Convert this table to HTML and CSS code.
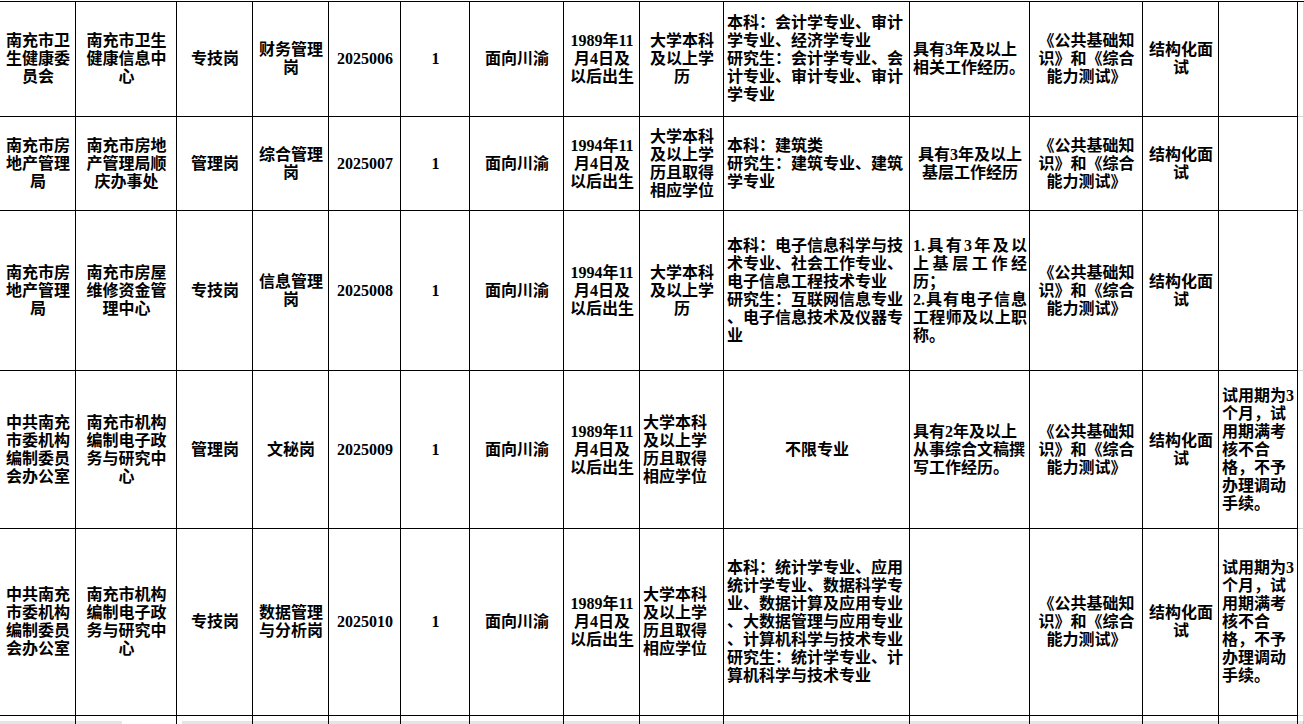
FILE: index.html
```html
<!DOCTYPE html>
<html lang="zh-CN">
<head>
<meta charset="utf-8">
<title>岗位表</title>
<link rel="stylesheet" href="styles.css">
</head>
<body>
<div class="sheet">
  <!-- row 1 -->
  <div class="c"><div>南充市卫生健康委员会</div></div>
  <div class="c"><div>南充市卫生健康信息中心</div></div>
  <div class="c"><div>专技岗</div></div>
  <div class="c"><div>财务管理岗</div></div>
  <div class="c"><div>2025006</div></div>
  <div class="c"><div>1</div></div>
  <div class="c"><div>面向川渝</div></div>
  <div class="c"><div>1989年11月4日及以后出生</div></div>
  <div class="c"><div>大学本科及以上学历</div></div>
  <div class="c"><div class="l b">本科：会计学专业、审计学专业、经济学专业<br>研究生：会计学专业、会计专业、审计专业、审计学专业</div></div>
  <div class="c"><div class="l">具有3年及以上相关工作经历。</div></div>
  <div class="c"><div>《公共基础知识》和《综合能力测试》</div></div>
  <div class="c"><div>结构化面试</div></div>
  <div class="c"></div>
  <div class="c x"></div>
  <!-- row 2 -->
  <div class="c"><div>南充市房地产管理局</div></div>
  <div class="c"><div>南充市房地产管理局顺庆办事处</div></div>
  <div class="c"><div>管理岗</div></div>
  <div class="c"><div>综合管理岗</div></div>
  <div class="c"><div>2025007</div></div>
  <div class="c"><div>1</div></div>
  <div class="c"><div>面向川渝</div></div>
  <div class="c"><div>1994年11月4日及以后出生</div></div>
  <div class="c"><div>大学本科及以上学历且取得相应学位</div></div>
  <div class="c"><div class="l b">本科：建筑类<br>研究生：建筑专业、建筑学专业</div></div>
  <div class="c"><div>具有3年及以上基层工作经历</div></div>
  <div class="c"><div>《公共基础知识》和《综合能力测试》</div></div>
  <div class="c"><div>结构化面试</div></div>
  <div class="c"></div>
  <div class="c x"></div>
  <!-- row 3 -->
  <div class="c"><div>南充市房地产管理局</div></div>
  <div class="c"><div>南充市房屋维修资金管理中心</div></div>
  <div class="c"><div>专技岗</div></div>
  <div class="c"><div>信息管理岗</div></div>
  <div class="c"><div>2025008</div></div>
  <div class="c"><div>1</div></div>
  <div class="c"><div>面向川渝</div></div>
  <div class="c"><div>1994年11月4日及以后出生</div></div>
  <div class="c"><div>大学本科及以上学历</div></div>
  <div class="c"><div class="l b">本科：电子信息科学与技术专业、社会工作专业、电子信息工程技术专业<br>研究生：互联网信息专业、电子信息技术及仪器专业</div></div>
  <div class="c"><div class="j">1.具有3年及以上基层工作经历；<br>2.具有电子信息工程师及以上职称。</div></div>
  <div class="c"><div>《公共基础知识》和《综合能力测试》</div></div>
  <div class="c"><div>结构化面试</div></div>
  <div class="c"></div>
  <div class="c x"></div>
  <!-- row 4 -->
  <div class="c"><div>中共南充市委机构编制委员会办公室</div></div>
  <div class="c"><div>南充市机构编制电子政务与研究中心</div></div>
  <div class="c"><div>管理岗</div></div>
  <div class="c"><div>文秘岗</div></div>
  <div class="c"><div>2025009</div></div>
  <div class="c"><div>1</div></div>
  <div class="c"><div>面向川渝</div></div>
  <div class="c"><div>1989年11月4日及以后出生</div></div>
  <div class="c"><div class="l">大学本科及以上学历且取得相应学位</div></div>
  <div class="c"><div>不限专业</div></div>
  <div class="c"><div class="l">具有2年及以上从事综合文稿撰写工作经历。</div></div>
  <div class="c"><div>《公共基础知识》和《综合能力测试》</div></div>
  <div class="c"><div>结构化面试</div></div>
  <div class="c"><div class="l">试用期为3个月，试用期满考核不合格，不予办理调动手续。</div></div>
  <div class="c x"></div>
  <!-- row 5 -->
  <div class="c"><div>中共南充市委机构编制委员会办公室</div></div>
  <div class="c"><div>南充市机构编制电子政务与研究中心</div></div>
  <div class="c"><div>专技岗</div></div>
  <div class="c"><div>数据管理与分析岗</div></div>
  <div class="c"><div>2025010</div></div>
  <div class="c"><div>1</div></div>
  <div class="c"><div>面向川渝</div></div>
  <div class="c"><div>1989年11月4日及以后出生</div></div>
  <div class="c"><div class="l">大学本科及以上学历且取得相应学位</div></div>
  <div class="c"><div class="l b">本科：统计学专业、应用统计学专业、数据科学专业、数据计算及应用专业、大数据管理与应用专业、计算机科学与技术专业<br>研究生：统计学专业、计算机科学与技术专业</div></div>
  <div class="c"></div>
  <div class="c"><div>《公共基础知识》和《综合能力测试》</div></div>
  <div class="c"><div>结构化面试</div></div>
  <div class="c"><div class="l">试用期为3个月，试用期满考核不合格，不予办理调动手续。</div></div>
  <div class="c x"></div>
  <!-- row 6 (cut off) -->
  <div class="c"></div>
  <div class="c"></div>
  <div class="c"></div>
  <div class="c"></div>
  <div class="c"></div>
  <div class="c"></div>
  <div class="c"></div>
  <div class="c"></div>
  <div class="c"></div>
  <div class="c"></div>
  <div class="c"></div>
  <div class="c"></div>
  <div class="c"></div>
  <div class="c"></div>
  <div class="c x"></div>
</div>
<div class="hbar"><span class="seg seg1"></span><span class="seg seg2"></span></div>
</body>
</html>
```
FILE: styles.css
```css
html, body {
  margin: 0;
  padding: 0;
  background: #ffffff;
  overflow: hidden;
}

body {
  font-family: "Liberation Serif", "Noto Sans CJK SC", serif;
  font-weight: 700;
  font-size: 16px;
  line-height: 18px;
  color: #000000;
  width: 1304px;
  height: 724px;
  position: relative;
}

.sheet {
  display: grid;
  grid-template-columns: 76px 101px 76px 76px 72px 69px 94px 76px 84px 186px 120px 113px 76px 79px 6px;
  grid-template-rows: 115px 94px 160px 158px 187px 20px;
  border-top: 1px solid #000000;
  margin-top: 1px;
  width: max-content;
}

.c {
  box-sizing: border-box;
  border-right: 1px solid #000000;
  border-bottom: 1px solid #000000;
  display: flex;
  align-items: center;
  padding: 0 2px 0 3px;
  overflow: hidden;
}

.c > div {
  width: 100%;
  text-align: center;
}

.c > div.l {
  text-align: left;
}

.c > div.b {
  line-break: anywhere;
}

.c > div.j {
  text-align: justify;
  text-align-last: left;
}

.c.x {
  border-right-color: #d6d6d6;
  border-bottom-color: #d6d6d6;
}

.hbar {
  position: absolute;
  left: 0;
  top: 721px;
  width: 1304px;
  height: 3px;
  display: flex;
}

.seg {
  display: block;
  height: 3px;
  background: rgba(0, 0, 0, 0.1);
}

.seg1 {
  width: 122px;
  margin-right: 60px;
}

.seg2 {
  flex: 1;
}
```
